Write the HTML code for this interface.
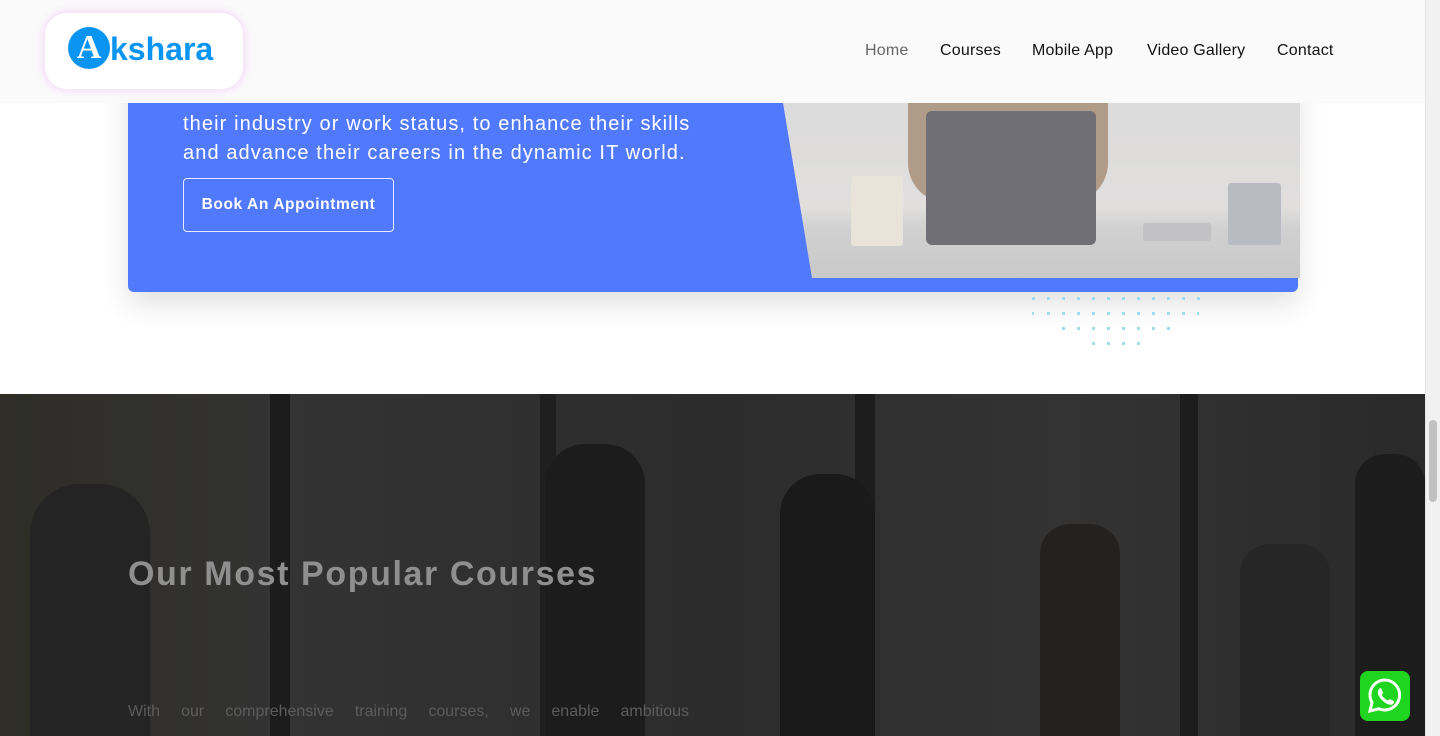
<!DOCTYPE html>
<html><head><meta charset="utf-8"><style>
*{margin:0;padding:0;box-sizing:border-box}
body{width:1440px;height:736px;overflow:hidden;background:#fff;font-family:"Liberation Sans",sans-serif;position:relative}
.hdr{position:absolute;left:0;top:0;width:1425px;height:103px;background:#fafafa;z-index:5}
.logo{position:absolute;left:45px;top:13px;width:198px;height:76px;background:#fff;border-radius:22px;box-shadow:0 0 8px 2px #f3dcf7}
.circ{position:absolute;left:68px;top:27px;width:42px;height:42px;border-radius:50%;background:#0b95f2;color:#fff;font-family:"Liberation Serif",serif;font-weight:bold;font-size:34px;line-height:42px;text-align:center}
.ks{position:absolute;left:110px;top:26px;font-size:32px;font-weight:bold;color:#0b95f2;line-height:46px}
nav a{position:absolute;top:42px;font-size:16px;letter-spacing:0.2px;color:#111;text-decoration:none}
.blue{position:absolute;left:128px;top:40px;width:1170px;height:252px;background:#5079fd;border-radius:0 0 6px 6px;box-shadow:0 12px 28px rgba(0,0,0,.12)}
.txt{position:absolute;left:183px;top:110px;color:#fff;font-size:20px;line-height:29px;letter-spacing:1.1px}
.btn{position:absolute;left:183px;top:178px;width:211px;height:54px;border:1px solid #e6ebff;border-radius:4px;color:#fff;font-weight:bold;font-size:15.5px;letter-spacing:0.6px;line-height:52px;text-align:center}
.img{position:absolute;left:783px;top:103px;width:517px;height:175px;background:linear-gradient(#dcdbdb,#e0dfde 60%,#d0d0d0 72%,#c9c9c9);clip-path:polygon(0 0,100% 0,100% 100%,29px 100%)}
.dark{position:absolute;left:0;top:394px;width:1425px;height:342px;background:#2b2b2b;overflow:hidden}
.sb{position:absolute;left:1425px;top:0;width:15px;height:736px;background:#f1f1f1;border-left:1px solid #e4e4e4}
.thumb{position:absolute;left:1429px;top:420px;width:8px;height:82px;background:#c1c1c1;border-radius:4px}
.wa{position:absolute;left:1360px;top:671px;width:50px;height:50px;background:#1fd51f;border-radius:8px}
</style></head><body>
<div class="blue"></div>
<div class="img">
 <div style="position:absolute;left:125px;top:0;width:200px;height:100px;background:#b09a88;border-radius:0 0 40px 40px"></div>
 <div style="position:absolute;left:143px;top:8px;width:170px;height:134px;background:#6f6f75;border-radius:6px"></div>
 <div style="position:absolute;left:68px;top:73px;width:52px;height:70px;background:#e9e4d9;border-radius:3px"></div>
 <div style="position:absolute;left:445px;top:80px;width:53px;height:62px;background:#b8bcc2;border-radius:3px"></div>
 <div style="position:absolute;left:360px;top:120px;width:68px;height:18px;background:#c2c2c4;border-radius:3px"></div>
</div>
<div class="txt">their industry or work status, to enhance their skills<br>and advance their careers in the dynamic IT world.</div>
<div class="btn">Book An Appointment</div>
<svg style="position:absolute;left:1030px;top:296px" width="172" height="52">
 <g fill="#9fdcef">
 <rect x="2" y="1" width="3" height="3"/><rect x="17" y="1" width="3" height="3"/><rect x="32" y="1" width="3" height="3"/><rect x="47" y="1" width="3" height="3"/><rect x="62" y="1" width="3" height="3"/><rect x="77" y="1" width="3" height="3"/><rect x="92" y="1" width="3" height="3"/><rect x="107" y="1" width="3" height="3"/><rect x="122" y="1" width="3" height="3"/><rect x="137" y="1" width="3" height="3"/><rect x="152" y="1" width="3" height="3"/><rect x="167" y="1" width="3" height="3"/>
 <rect x="2" y="16" width="2" height="3"/><rect x="17" y="16" width="3" height="3"/><rect x="32" y="16" width="3" height="3"/><rect x="47" y="16" width="3" height="3"/><rect x="62" y="16" width="3" height="3"/><rect x="77" y="16" width="3" height="3"/><rect x="92" y="16" width="3" height="3"/><rect x="107" y="16" width="3" height="3"/><rect x="122" y="16" width="3" height="3"/><rect x="137" y="16" width="3" height="3"/><rect x="152" y="16" width="3" height="3"/><rect x="167" y="16" width="2" height="3"/>
 <rect x="32" y="31" width="3" height="3"/><rect x="47" y="31" width="3" height="3"/><rect x="62" y="31" width="3" height="3"/><rect x="77" y="31" width="3" height="3"/><rect x="92" y="31" width="3" height="3"/><rect x="107" y="31" width="3" height="3"/><rect x="122" y="31" width="3" height="3"/><rect x="137" y="31" width="3" height="3"/>
 <rect x="62" y="46" width="3" height="3"/><rect x="77" y="46" width="3" height="3"/><rect x="92" y="46" width="3" height="3"/><rect x="107" y="46" width="3" height="3"/>
 </g></svg>
<div class="hdr">
 <div class="logo"></div>
 <div class="circ">A</div>
 <div class="ks">kshara</div>
 <nav>
  <a style="left:865px;color:#666">Home</a>
  <a style="left:940px">Courses</a>
  <a style="left:1032px">Mobile App</a>
  <a style="left:1147px">Video Gallery</a>
  <a style="left:1277px">Contact</a>
 </nav>
</div>
<div class="dark">
 <div style="position:absolute;left:0;top:0;width:1425px;height:342px;background:linear-gradient(90deg,#2e2d28 0%,#333 20%,#2c2c2c 50%,#333 75%,#2a2a2a 100%)"></div>
 <div style="position:absolute;left:270px;top:0;width:20px;height:342px;background:#1c1c1c"></div>
 <div style="position:absolute;left:540px;top:0;width:16px;height:342px;background:#1f1f1f"></div>
 <div style="position:absolute;left:855px;top:0;width:20px;height:342px;background:#1d1d1d"></div>
 <div style="position:absolute;left:1180px;top:0;width:18px;height:342px;background:#1d1d1d"></div>
 <div style="position:absolute;left:780px;top:80px;width:95px;height:262px;background:#1a1a1a;border-radius:40px 40px 0 0"></div>
 <div style="position:absolute;left:545px;top:50px;width:100px;height:292px;background:#1c1c1c;border-radius:40px 40px 0 0"></div>
 <div style="position:absolute;left:1040px;top:130px;width:80px;height:212px;background:#232220;border-radius:30px 30px 0 0"></div>
 <div style="position:absolute;left:1240px;top:150px;width:90px;height:192px;background:#262626;border-radius:30px 30px 0 0"></div>
 <div style="position:absolute;left:1355px;top:60px;width:70px;height:282px;background:#1c1c1c;border-radius:30px 30px 0 0"></div>
 <div style="position:absolute;left:30px;top:90px;width:120px;height:252px;background:#242424;border-radius:50px 50px 0 0"></div>
 <div style="position:absolute;left:128px;top:161px;font-size:34px;font-weight:bold;color:#8f8f8f;letter-spacing:1.6px">Our Most Popular Courses</div>
 <div style="position:absolute;left:128px;top:305px;width:561px;font-size:16px;color:#5c5c5c;text-align:justify;text-align-last:justify;line-height:26px">With our comprehensive training courses, we enable ambitious</div>
</div>
<div class="sb"></div><div class="thumb"></div>
<div class="wa"><svg width="50" height="50" viewBox="0 0 50 50"><path d="M25 9a15 15 0 0 0-13 22.5L10 40l8.7-2.2A15 15 0 1 0 25 9z" fill="none" stroke="#fff" stroke-width="3"/><path d="M19 18c1-1 2-1 2.5 0l1.5 3.5c.3.8-.7 1.700-1.2 2.300 1.300 2.600 3.400 4.600 6 5.800.6-.5 1.400-1.600 2.200-1.300l3.500 1.600c1 .5.8 1.800-.2 2.800-1.500 1.500-4 1.500-7.500-.6s-6-5-7.300-7.800c-1.100-2.600-.5-5 .5-6.300z" fill="#fff"/></svg></div>
</body></html>
